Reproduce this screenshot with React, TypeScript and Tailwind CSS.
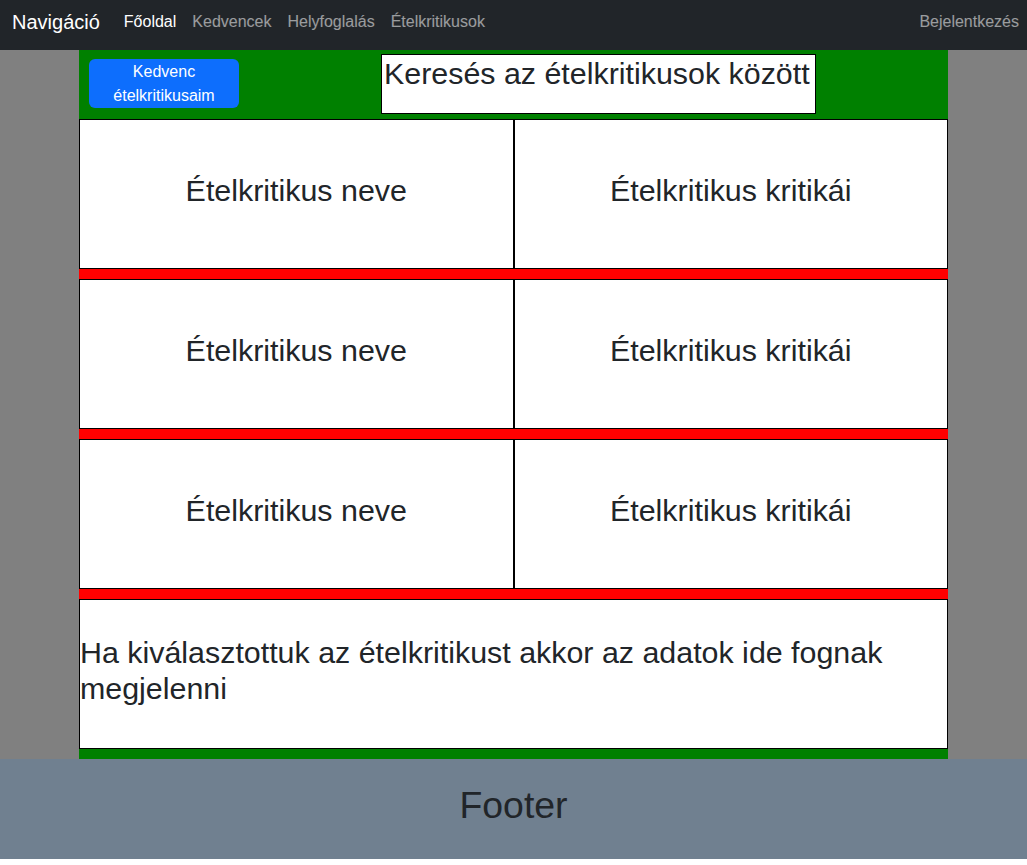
const NAV_LINKS = ["Kedvencek", "Helyfoglalás", "Ételkritikusok"];

function CriticRow() {
  return (
    <>
      <div className="grid grid-cols-2 h-[150px] bg-white">
        <div className="border border-black flex items-center justify-center">
          <h2 className="text-[30.4px] leading-[1.2] mb-2">Ételkritikus neve</h2>
        </div>
        <div className="border border-black flex items-center justify-center">
          <h2 className="text-[30.4px] leading-[1.2] mb-2">Ételkritikus kritikái</h2>
        </div>
      </div>
      <div className="h-[10px] bg-[#ff0000]" />
    </>
  );
}

export default function App() {
  return (
    <div className="font-['Liberation_Sans',Arial,sans-serif] text-[#212529] bg-white min-h-[865px]">
      <nav className="h-[50px] bg-[#212529] flex items-center pb-[6px] pl-3 pr-2">
        <span className="text-[20px] leading-[30px] text-white mr-4">Navigáció</span>
        <a className="px-2 text-base leading-6 text-white">Főoldal</a>
        {NAV_LINKS.map((l) => (
          <a key={l} className="px-2 text-base leading-6 text-white/55">
            {l}
          </a>
        ))}
        <a className="ml-auto px-0 text-base leading-6 text-white/55">Bejelentkezés</a>
      </nav>

      <div className="bg-[#808080]">
        <div className="w-[869px] mx-auto bg-[#008000]">
          <div className="h-[69px] flex items-start">
            <button className="ml-[10px] mt-[9px] w-[150px] h-[49px] rounded-md bg-[#0d6efd] text-white text-base leading-6">
              Kedvenc
              <br />
              ételkritikusaim
            </button>
            <div className="ml-[142px] mt-[4px] w-[435px] h-[60px] bg-white border border-black pl-[2px]">
              <h2 className="text-[30.4px] leading-[1.2]">Keresés az ételkritikusok között</h2>
            </div>
          </div>

          <CriticRow />
          <CriticRow />
          <CriticRow />

          <div className="h-[150px] bg-white border border-black flex items-center">
            <h2 className="text-[30.4px] leading-[1.2] mb-2">
              Ha kiválasztottuk az ételkritikust akkor az adatok ide fognak megjelenni
            </h2>
          </div>
          <div className="h-[10px]" />
        </div>
      </div>

      <footer className="h-[100px] bg-[#708090] flex items-center justify-center">
        <h1 className="text-[37.4px] leading-[1.2] mb-2">Footer</h1>
      </footer>
    </div>
  );
}
